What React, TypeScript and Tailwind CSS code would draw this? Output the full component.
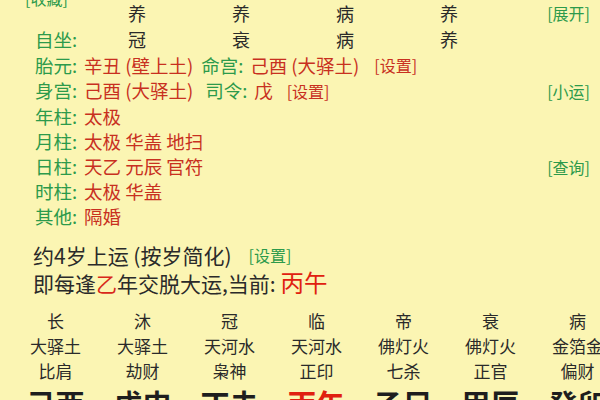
import React from "react";

const G = "text-[#2c9a4b]";
const R = "text-[#c8301f]";
const K = "text-[#2a2a2a]";

function Cols({ items }: { items: string[] }) {
  return (
    <>
      {items.map((t, i) => (
        <div key={i} className={`w-[104px] text-center text-[18px] ${K}`}>
          {t}
        </div>
      ))}
    </>
  );
}

function LabelRow({
  h,
  children,
  right,
}: {
  h: string;
  children: React.ReactNode;
  right?: string;
}) {
  return (
    <div className={`shrink-0 flex items-center pl-[35px] pr-[10px] ${h}`}>
      <div className="flex items-center whitespace-pre text-[18.5px]">{children}</div>
      {right && <div className={`ml-auto text-[16px] ${G}`}>{right}</div>}
    </div>
  );
}

function L({ t }: { t: string }) {
  return <span className={`${G} w-[49px]`}>{t}</span>;
}

const grid = [
  ["长", "沐", "冠", "临", "帝", "衰", "病"],
  ["大驿土", "大驿土", "天河水", "天河水", "佛灯火", "佛灯火", "金箔金"],
  ["比肩", "劫财", "枭神", "正印", "七杀", "正官", "偏财"],
];
const pillars = ["己酉", "戊申", "丁未", "丙午", "乙巳", "甲辰", "癸卯"];

export default function App() {
  return (
    <div
      className="w-[600px] h-[400px] overflow-hidden bg-[#fbf5b3] flex flex-col leading-none"
      style={{ fontFamily: '"Noto Sans CJK SC", "Noto Sans", sans-serif' }}
    >
      {/* row 1 */}
      <div className="shrink-0 flex items-center h-[26px] pl-[25px] pr-[10px]">
        <div className={`w-[60px] self-start mt-[-10px] text-[16px] ${G}`}>[收藏]</div>
        <Cols items={["养", "养", "病", "养"]} />
        <div className={`ml-auto text-[16px] ${G}`}>[展开]</div>
      </div>
      {/* row 2 */}
      <div className="shrink-0 flex items-center h-[26px] pl-[35px]">
        <div className={`w-[50px] text-[18.5px] ${G}`}>自坐:</div>
        <Cols items={["冠", "衰", "病", "养"]} />
      </div>
      <LabelRow h="h-[26px]">
        <L t="胎元:" />
        <span className={`${R} mr-[8px]`}>辛丑 (壁上土)</span>
        <L t="命宫:" />
        <span className={`${R} mr-[15px]`}>己酉 (大驿土)</span>
        <span className={`text-[16px] ${R}`}>[设置]</span>
      </LabelRow>
      <LabelRow h="h-[25px]" right="[小运]">
        <L t="身宫:" />
        <span className={`${R} mr-[12px]`}>己酉 (大驿土)</span>
        <L t="司令:" />
        <span className={`${R} mr-[14px]`}>戊</span>
        <span className={`text-[16px] ${R}`}>[设置]</span>
      </LabelRow>
      <LabelRow h="h-[26px]">
        <L t="年柱:" />
        <span className={R}>太极</span>
      </LabelRow>
      <LabelRow h="h-[25px]">
        <L t="月柱:" />
        <span className={R}>太极 华盖 地扫</span>
      </LabelRow>
      <LabelRow h="h-[25px]" right="[查询]">
        <L t="日柱:" />
        <span className={R}>天乙 元辰 官符</span>
      </LabelRow>
      <LabelRow h="h-[25px]">
        <L t="时柱:" />
        <span className={R}>太极 华盖</span>
      </LabelRow>
      <LabelRow h="h-[25px]">
        <L t="其他:" />
        <span className={R}>隔婚</span>
      </LabelRow>

      <div className={`shrink-0 mt-[13px] h-[26px] flex items-center pl-[33px] whitespace-pre text-[21px] ${K}`}>
        <span className="mr-[17px]">约4岁上运 (按岁简化)</span>
        <span className={`text-[16px] ${G}`}>[设置]</span>
      </div>
      <div className={`shrink-0 h-[30px] flex items-center pl-[33px] whitespace-pre text-[21px] ${K}`}>
        <span>即每逢</span>
        <span className="text-[#d8281a]">乙</span>
        <span>年交脱大运,当前: </span>
        <span className="text-[23.5px] text-[#e0200f]">丙午</span>
      </div>

      <div className="shrink-0 mt-[10px] pl-[12px] grid grid-cols-[repeat(7,87px)] w-[621px]">
        {grid.map((row, ri) =>
          row.map((t, ci) => (
            <div
              key={`${ri}-${ci}`}
              className={`h-[25px] flex items-center justify-center whitespace-nowrap text-[17px] ${K}`}
            >
              {t}
            </div>
          ))
        )}
        {pillars.map((t, ci) => (
          <div
            key={`p-${ci}`}
            className={`h-[40px] flex items-center justify-center whitespace-nowrap text-[29px] font-bold ${
              ci === 3 ? "text-[#e0200f]" : "text-[#1e1e1e]"
            }`}
          >
            {t}
          </div>
        ))}
      </div>
    </div>
  );
}
